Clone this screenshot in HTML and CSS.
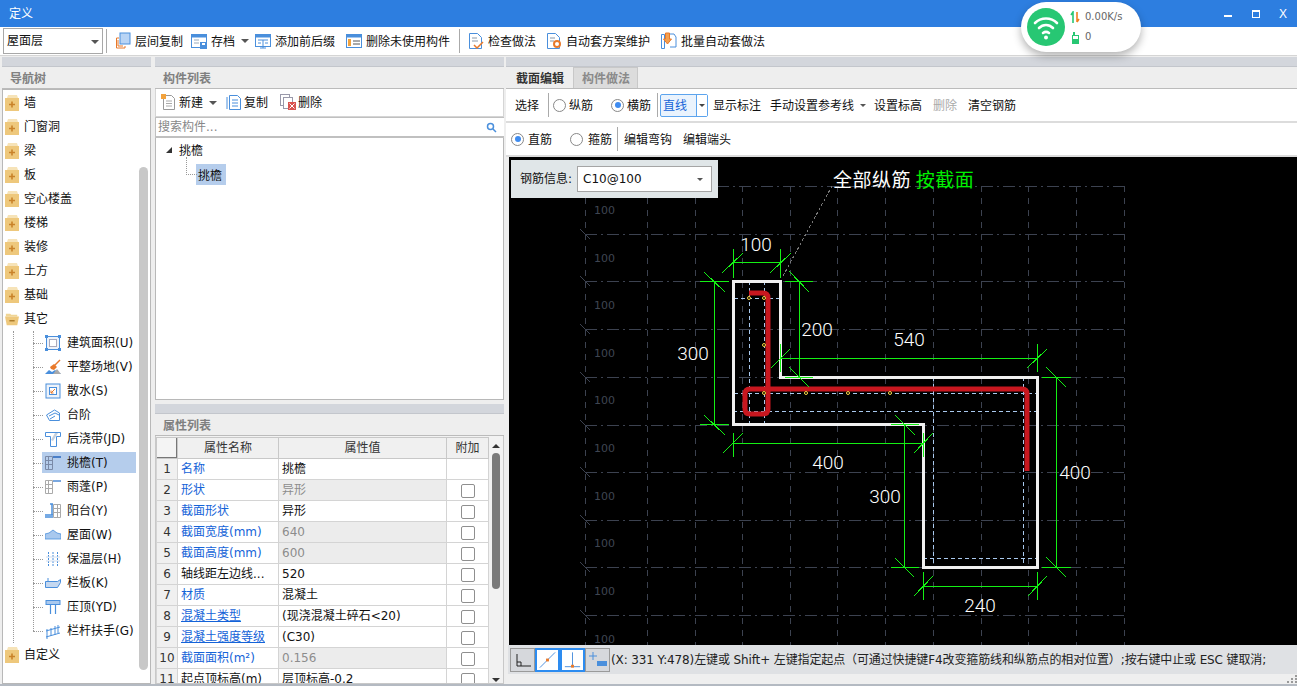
FILE: index.html
```html
<!DOCTYPE html>
<html lang="zh">
<head>
<meta charset="utf-8">
<title>定义</title>
<link rel="stylesheet" href="styles.css">
</head>
<body>
<svg class="defs" width="0" height="0">
  <symbol id="folder" viewBox="0 0 14 16"><path d="M3 0h9l1 3H2z" fill="#f6e3b8"/><rect x="0" y="3" width="14" height="13" fill="#eec87c"/><path d="M7 6.500v6M4 9.500h6" stroke="#c9822a" stroke-width="1.600"/></symbol>
  <symbol id="folderopen" viewBox="0 0 16 16"><path d="M1 2h5l1 1h7v2H1z" fill="#f0d595"/><path d="M0 5h16l-2 10H2z" fill="#eec87c"/><path d="M5 10h6" stroke="#a97a2a" stroke-width="1.600"/></symbol>
  <symbol id="caret" viewBox="0 0 8 4"><path d="M0 0h8L4 4z" fill="#555"/></symbol>
</svg>
<div class="app">
  <header class="titlebar">
    <span class="title">定义</span>
    <div class="winctl">
      <svg width="10" height="10" viewBox="0 0 10 10"><rect x="1" y="6" width="8" height="2" fill="#fff"/></svg>
      <svg width="10" height="10" viewBox="0 0 10 10"><rect x="1.500" y="1.500" width="7" height="7" fill="none" stroke="#fff"/><rect x="1" y="1" width="8" height="2" fill="#fff"/></svg>
      <span class="winx">X</span>
    </div>
  </header>
  <div class="netwidget">
    <svg class="wifi" width="38" height="38" viewBox="0 0 38 38"><circle cx="19" cy="19" r="19" fill="#27c773"/><g fill="none" stroke="#fff" stroke-width="2.600" stroke-linecap="round"><path d="M8 15c6-6 16-6 22 0"/><path d="M12 20c4-4 10-4 14 0"/><path d="M16 25c2-1.500 4-1.500 6 0"/></g><circle cx="19" cy="29.500" r="2" fill="#fff"/></svg>
    <div class="netinfo">
      <div class="netrow"><svg width="10" height="13" viewBox="0 0 10 13"><path d="M3 12V2M1 4l2-3 0 11" fill="none" stroke="#27c773" stroke-width="1.600"/><path d="M7 1v10M9 8l-2 3" fill="none" stroke="#f08020" stroke-width="1.600"/></svg><span>0.00K/s</span></div>
      <div class="netrow"><svg width="10" height="13" viewBox="0 0 10 13"><rect x="2" y="4" width="7" height="9" fill="#27c773"/><rect x="3" y="5" width="5" height="3" fill="#fff"/><rect x="3" y="1" width="2" height="3" fill="#27c773"/></svg><span>0</span></div>
    </div>
  </div>
  <div class="mainbar">
    <div class="floorselect"><span>屋面层</span><svg class="caret" width="8" height="4"><use href="#caret"/></svg></div>
    <span class="sep s3"></span>
    <div class="btn g8"><svg width="16" height="18" viewBox="0 0 16 18"><rect x="5" y="1" width="10" height="11" fill="#b8d4f5" stroke="#4a8fdc"/><path d="M4 6H1.500v10H10v-2" fill="none" stroke="#e8792a"/><path d="M3 8v6h5" fill="none" stroke="#e8792a"/></svg><span>层间复制</span></div>
    <div class="btn g6"><svg width="16" height="16" viewBox="0 0 16 16"><rect x="0.500" y="1.500" width="15" height="13" fill="#fff" stroke="#4a8fdc"/><rect x="0.500" y="1.500" width="15" height="3" fill="#4a8fdc"/><path d="M3 7h5M3 10h5" stroke="#9ab"/><rect x="9" y="9" width="7" height="7" fill="#4a8fdc"/><rect x="11" y="10" width="3" height="2" fill="#fff"/></svg><span>存档</span></div>
    <svg class="caret g6" width="8" height="4"><use href="#caret"/></svg>
    <div class="btn g11"><svg width="16" height="16" viewBox="0 0 16 16"><rect x="0.500" y="1.500" width="15" height="12" fill="#fff" stroke="#4a8fdc"/><rect x="0.500" y="1.500" width="15" height="3" fill="#4a8fdc"/><path d="M3 7h10M8 7v8M5 15h6M3 10h3M10 10h3" stroke="#4a8fdc"/></svg><span>添加前后缀</span></div>
    <div class="btn g9"><svg width="16" height="16" viewBox="0 0 16 16"><rect x="0.500" y="1.500" width="15" height="13" fill="#fff" stroke="#4a8fdc"/><rect x="0.500" y="1.500" width="15" height="3" fill="#4a8fdc"/><rect x="2" y="6" width="3" height="7" fill="#f2a23c"/><path d="M7 8h7M7 11h7" stroke="#555"/></svg><span>删除未使用构件</span></div>
    <span class="sep g8"></span>
    <div class="btn g10"><svg width="16" height="16" viewBox="0 0 16 16"><path d="M1.500.5h8l4 4v11h-12z" fill="#fff" stroke="#4a8fdc"/><path d="M4 5h5M4 8h6" stroke="#89a"/><path d="M6 12l3 3 6-6" fill="none" stroke="#e8792a" stroke-width="1.500"/></svg><span>检查做法</span></div>
    <div class="btn g10"><svg width="16" height="16" viewBox="0 0 16 16"><path d="M1.500.5h8l4 4v11h-12z" fill="#fff" stroke="#4a8fdc"/><path d="M4 5h5M4 8h4" stroke="#89a"/><circle cx="11" cy="11" r="3" fill="#fff" stroke="#e8792a" stroke-width="2"/></svg><span>自动套方案维护</span></div>
    <div class="btn"><svg width="17" height="18" viewBox="0 0 17 18"><path d="M1.500 2.500h3v14h-3zM5 2h9l2 3v10h-6" fill="none" stroke="#4a8fdc"/><path d="M5.500 1h4v6h2l-4 5-4-5h2z" fill="#f4a050" stroke="#e8792a"/></svg><span>批量自动套做法</span></div>
  </div>

  <div class="workspace">
    <section class="panel">
      <div class="panelbar"></div>
      <div class="tabstrip"><span class="tab plain">导航树</span></div>
      <div class="navtree">
        <div class="navrow"><svg class="fold"><use href="#folder"/></svg>墙</div>
        <div class="navrow"><svg class="fold"><use href="#folder"/></svg>门窗洞</div>
        <div class="navrow"><svg class="fold"><use href="#folder"/></svg>梁</div>
        <div class="navrow"><svg class="fold"><use href="#folder"/></svg>板</div>
        <div class="navrow"><svg class="fold"><use href="#folder"/></svg>空心楼盖</div>
        <div class="navrow"><svg class="fold"><use href="#folder"/></svg>楼梯</div>
        <div class="navrow"><svg class="fold"><use href="#folder"/></svg>装修</div>
        <div class="navrow"><svg class="fold"><use href="#folder"/></svg>土方</div>
        <div class="navrow"><svg class="fold"><use href="#folder"/></svg>基础</div>
        <div class="navrow"><svg class="fold"><use href="#folderopen"/></svg>其它</div>
        <div class="navchildren">
          <div class="childrow"><svg width="16" height="16" viewBox="0 0 16 16"><rect x="1.500" y="1.500" width="13" height="13" fill="#eef3fa" stroke="#4a8fdc"/><rect x="4.500" y="4.500" width="7" height="7" fill="#fff" stroke="#aab"/><path d="M0 0h3v3H0zM13 0h3v3h-3zM0 13h3v3H0zM13 13h3v3h-3z" fill="#4a8fdc"/></svg><span>建筑面积(U)</span></div>
          <div class="childrow"><svg width="16" height="16" viewBox="0 0 16 16"><path d="M0 15l4-4 3 2 3-2 6 4z" fill="#4a8fdc"/><path d="M8 15l4-5 4 5z" fill="#aaa"/><path d="M15 1L9 7" stroke="#e8792a" stroke-width="1.500"/><path d="M9 5l3 3-3 3-3-1-1-2z" fill="#e8792a"/></svg><span>平整场地(V)</span></div>
          <div class="childrow"><svg width="16" height="16" viewBox="0 0 16 16"><rect x="1" y="1" width="14" height="14" fill="#eef3fa" stroke="#4a8fdc"/><rect x="4.500" y="4.500" width="7" height="7" fill="#fff" stroke="#4a8fdc"/><path d="M10 6l-4 4M6 7.500V10h2.500" fill="none" stroke="#e8792a"/></svg><span>散水(S)</span></div>
          <div class="childrow"><svg width="16" height="16" viewBox="0 0 16 16"><path d="M1.500 8l8-5 5 3v7.500h-10z" fill="#fff" stroke="#4a8fdc"/><path d="M4 9l6-3 4 2M5 12l5-3" fill="none" stroke="#4a8fdc"/></svg><span>台阶</span></div>
          <div class="childrow"><svg width="16" height="16" viewBox="0 0 16 16"><path d="M.5 1.500h15v4h-4v10h-6v-10h-5z" fill="#fff" stroke="#4a8fdc"/><path d="M6 9l4-7h3l-5 8z" fill="#c5d0de"/></svg><span>后浇带(JD)</span></div>
          <div class="childrow sel"><svg width="16" height="16" viewBox="0 0 16 16"><path d="M.5 1.500h7v13h-7zM.5 5.500h7M.5 9.500h7M3.500 1.500v13" fill="none" stroke="#7a8aa8"/><path d="M8 1h8v2H8z" fill="#4a7fc8"/></svg><span>挑檐(T)</span></div>
          <div class="childrow"><svg width="16" height="16" viewBox="0 0 16 16"><path d="M.5 1.500h7v13h-7zM.5 5.500h7M.5 9.500h7M3.500 1.500v13" fill="none" stroke="#aaa"/><path d="M8 1h8v2H8z" fill="#7aa8e0"/></svg><span>雨蓬(P)</span></div>
          <div class="childrow"><svg width="16" height="16" viewBox="0 0 16 16"><path d="M8.500 1.500h7v13h-7zM8.500 5.500h7M8.500 9.500h7M12.500 1.500v13" fill="none" stroke="#aaa"/><path d="M5 1h3M7 1v11M0 12h8M0 14h8" stroke="#4a8fdc" stroke-width="1.500" fill="none"/></svg><span>阳台(Y)</span></div>
          <div class="childrow"><svg width="16" height="16" viewBox="0 0 16 16"><path d="M0 7l4-1 4-3 4 3 4 1v5H0z" fill="#a8c8ee" stroke="#4a8fdc" stroke-width=".8"/></svg><span>屋面(W)</span></div>
          <div class="childrow"><svg width="16" height="16" viewBox="0 0 16 16"><path d="M3.500 1v14M8 1v14M12.500 1v14" stroke="#4a8fdc" stroke-dasharray="2 1" fill="none"/><path d="M1 6h14M1 10h14" stroke="#cfdcee"/></svg><span>保温层(H)</span></div>
          <div class="childrow"><svg width="16" height="16" viewBox="0 0 16 16"><path d="M.5 6.500h12l3-2v3l-3 5H.5z" fill="#c5d8f0" stroke="#4a8fdc"/><path d="M3 3v3" stroke="#4a8fdc"/></svg><span>栏板(K)</span></div>
          <div class="childrow"><svg width="16" height="16" viewBox="0 0 16 16"><rect x="1" y="1.500" width="14" height="4" fill="#a8c8ee" stroke="#4a8fdc"/><path d="M5.500 5v10M10.500 5v10" stroke="#4a8fdc" stroke-width="1.200"/></svg><span>压顶(YD)</span></div>
          <div class="childrow"><svg width="16" height="16" viewBox="0 0 16 16"><path d="M1 8l14-4M2 6v10M6 5v8M10 3v9M13 2v8M1 14l14-4" fill="none" stroke="#4a8fdc"/></svg><span>栏杆扶手(G)</span></div>
        </div>
        <div class="navrow"><svg class="fold"><use href="#folder"/></svg>自定义</div>
        <div class="navscroll"></div>
      </div>
    </section>

    <div class="midcol">
      <section class="panel compo">
        <div class="panelbar"></div>
        <div class="tabstrip"><span class="tab plain">构件列表</span></div>
        <div class="compotools">
          <div class="btn"><svg width="16" height="16" viewBox="0 0 16 16"><path d="M2.500 1.500h8l3 3v11h-11z" fill="#fff" stroke="#999"/><path d="M5 7h6M5 9.500h6M5 12h6" stroke="#aaa"/><rect x="0" y="0" width="5" height="5" fill="#f2a23c"/></svg><span>新建</span></div>
          <svg class="caret ctcaret" width="8" height="4"><use href="#caret"/></svg>
          <div class="btn"><svg width="16" height="16" viewBox="0 0 16 16"><path d="M3.500 1.500h8l3 3v11h-11z" fill="#fff" stroke="#4a8fdc"/><path d="M1 3v12" stroke="#4a8fdc"/><path d="M6 6h6M6 9h6M6 12h6" stroke="#4a8fdc"/></svg><span>复制</span></div>
          <div class="btn cdel"><svg width="16" height="16" viewBox="0 0 16 16"><rect x="0.500" y="0.500" width="9" height="11" fill="#fff" stroke="#99a"/><rect x="3.500" y="3.500" width="9" height="11" fill="#fff" stroke="#99a"/><rect x="8" y="8" width="8" height="8" fill="#d9534f"/><path d="M9.500 9.500l5 5M14.500 9.500l-5 5" stroke="#fff"/></svg><span>删除</span></div>
        </div>
        <div class="searchbox"><span>搜索构件...</span><svg width="11" height="11" viewBox="0 0 11 11"><circle cx="4.500" cy="4.500" r="3" fill="none" stroke="#4a8fdc" stroke-width="1.500"/><path d="M7 7l3 3" stroke="#4a8fdc" stroke-width="1.500"/></svg></div>
        <div class="compotree">
          <div class="ctroot"><i class="tri"></i>挑檐</div>
          <div class="ctchild"><span class="ctsel">挑檐</span></div>
        </div>
      </section>

      <section class="panel props">
        <div class="panelbar"></div>
        <div class="tabstrip"><span class="tab plain">属性列表</span></div>
        <div class="tablewrap">
          <table class="ptable">
            <colgroup><col class="c1"><col class="c2"><col class="c3"><col class="c4"></colgroup>
            <thead><tr><th class="corner"></th><th>属性名称</th><th>属性值</th><th>附加</th></tr></thead>
            <tbody>
              <tr><td class="num">1</td><td class="lk">名称</td><td>挑檐</td><td></td></tr>
              <tr><td class="num">2</td><td class="lk">形状</td><td class="ro">异形</td><td class="ck"><span class="check"></span></td></tr>
              <tr><td class="num">3</td><td class="lk">截面形状</td><td>异形</td><td class="ck"><span class="check"></span></td></tr>
              <tr><td class="num">4</td><td class="lk">截面宽度(mm)</td><td class="ro">640</td><td class="ck"><span class="check"></span></td></tr>
              <tr><td class="num">5</td><td class="lk">截面高度(mm)</td><td class="ro">600</td><td class="ck"><span class="check"></span></td></tr>
              <tr><td class="num">6</td><td>轴线距左边线...</td><td>520</td><td class="ck"><span class="check"></span></td></tr>
              <tr><td class="num">7</td><td class="lk">材质</td><td>混凝土</td><td class="ck"><span class="check"></span></td></tr>
              <tr><td class="num">8</td><td class="lk u">混凝土类型</td><td>(现浇混凝土碎石&lt;20)</td><td class="ck"><span class="check"></span></td></tr>
              <tr><td class="num">9</td><td class="lk u">混凝土强度等级</td><td>(C30)</td><td class="ck"><span class="check"></span></td></tr>
              <tr><td class="num">10</td><td class="lk">截面面积(m²)</td><td class="ro">0.156</td><td class="ck"><span class="check"></span></td></tr>
              <tr><td class="num">11</td><td>起点顶标高(m)</td><td>层顶标高-0.2</td><td class="ck"><span class="check"></span></td></tr>
            </tbody>
          </table>
          <div class="vscroll">
            <svg width="8" height="4" viewBox="0 0 8 4"><path d="M0 4h8L4 0z" fill="#333"/></svg>
            <div class="vthumb"></div>
            <svg width="8" height="4" viewBox="0 0 8 4"><path d="M0 0h8L4 4z" fill="#333"/></svg>
          </div>
        </div>
      </section>
    </div>

    <section class="panel right">
      <div class="panelbar"></div>
      <div class="tabstrip tabs2"><span class="tab active">截面编辑</span><span class="tab inactive">构件做法</span></div>
      <div class="edittools">
        <span class="ti ml7">选择</span>
        <span class="sep ml9"></span>
        <span class="radio ml4"></span><span class="ti ml3">纵筋</span>
        <span class="radio on ml18"></span><span class="ti ml3">横筋</span>
        <span class="sep ml6"></span>
        <div class="linecombo ml2"><span class="lcv">直线</span><span class="lcd"><svg width="6" height="3" viewBox="0 0 8 4"><path d="M0 0h8L4 4z" fill="#444"/></svg></span></div>
        <span class="ti ml5">显示标注</span>
        <span class="ti ml9">手动设置参考线</span>
        <svg class="caret ml6" width="6" height="3" viewBox="0 0 8 4"><path d="M0 0h8L4 4z" fill="#555"/></svg>
        <span class="ti ml8">设置标高</span>
        <span class="ti ml11 dis">删除</span>
        <span class="ti ml11">清空钢筋</span>
      </div>
      <div class="edittools second">
        <span class="radio on ml3"></span><span class="ti ml4">直筋</span>
        <span class="radio ml18"></span><span class="ti ml5">箍筋</span>
        <span class="sep ml5"></span>
        <span class="ti ml6">编辑弯钩</span>
        <span class="ti ml11">编辑端头</span>
      </div>
      <div class="canvas">
        <svg class="drawing" width="788" height="488" viewBox="509 157 788 488">
          <g class="gridh">
            <path d="M585 186H1124M585 234H1124M585 281H1124M585 329H1124M585 377H1124M585 425H1124M585 472H1124M585 520H1124M585 567H1124M585 615H1124"/>
          </g>
          <g class="gridv">
            <path d="M585 186V645M647 186V645M695 186V645M742 186V645M790 186V645M837 186V645M885 186V645M933 186V645M981 186V645M1028 186V645M1076 186V645M1124 186V645"/>
          </g>
          <g class="ticks"><path d="M580 181l10 10M580 229l10 10M580 276l10 10M580 324l10 10M580 372l10 10M580 420l10 10M580 467l10 10M580 515l10 10M580 562l10 10M580 610l10 10"/></g>
          <g class="axis">
            <text x="594" y="214">100</text><text x="594" y="262">100</text><text x="594" y="309">100</text><text x="594" y="357">100</text><text x="594" y="404">100</text><text x="594" y="452">100</text><text x="594" y="500">100</text><text x="594" y="547">100</text><text x="594" y="595">100</text><text x="594" y="643">100</text>
          </g>
          <path class="leader" d="M783 276L832 186"/>
          <g class="inner"><path d="M734 298H780M734 393H1037M733 411H1037M749 281V424M764 281V424M1023 377V567M933 377V567M923 558H1037"/></g>
          <path class="outline" d="M733.500 281.500H780.500V377.500H1037.500V567.500H923.500V424.500H733.500Z"/>
          <path class="rebar" d="M749 293H763Q768 293 768 298V409Q768 414 763 414H750Q745 414 745 409V394Q745 389 750 389H1022Q1027 389 1027 394V471"/>
          <g class="points"><circle cx="749" cy="298" r="1.500"/><circle cx="764" cy="298" r="1.500"/><circle cx="764" cy="345" r="1.500"/><circle cx="764" cy="393" r="1.500"/><circle cx="806" cy="393" r="1.500"/><circle cx="848" cy="393" r="1.500"/><circle cx="890" cy="393" r="1.500"/></g>
          <g class="dims">
            <path d="M733 262H780M733 249V278M780 249V278M722 273L743 253M770 273L791 253"/>
            <path d="M714 281V424M700 281H729M700 424H729M704 272L725 292M704 415L725 435"/>
            <path d="M799 281V377M785 281H813M785 377H813M789 271L809 292M789 367L809 387"/>
            <path d="M780 358H1037M780 344V372M1037 344V372M771 368L790 349M1027 368L1047 349"/>
            <path d="M733 443H923M733 433V457M923 433V457M723 453L743 433M914 453L933 433"/>
            <path d="M904 424V567M891 424H919M891 567H919M895 415L915 435M895 558L914 577"/>
            <path d="M1056 377V567M1042 377H1071M1042 567H1071M1046 367L1066 387M1046 557L1066 577"/>
            <path d="M923 586H1037M923 572V600M1037 572V600M914 596L933 576M1028 596L1047 576"/>
          </g>
          <g class="dimtext">
            <text x="756" y="251">100</text><text x="693" y="360">300</text><text x="817" y="336">200</text><text x="909" y="346">540</text><text x="828" y="469">400</text><text x="885" y="503">300</text><text x="1075" y="479">400</text><text x="980" y="612">240</text>
          </g>
          <text class="note" x="833" y="187">全部纵筋 <tspan class="noteg">按截面</tspan></text>
        </svg>
        <div class="rebarinfo">
          <span>钢筋信息:</span>
          <div class="rebarselect"><span>C10@100</span><svg width="6" height="3" viewBox="0 0 8 4"><path d="M0 0h8L4 4z" fill="#555"/></svg></div>
        </div>
      </div>
      <div class="statusbar">
        <div class="sbtn"><svg width="22" height="22" viewBox="0 0 22 22"><path d="M5 5v12h14M5 13h4v4" fill="none" stroke="#222"/></svg></div>
        <div class="sbtn on"><svg width="22" height="22" viewBox="0 0 22 22"><path d="M3 19L19 3" stroke="#4a8fdc"/><rect x="9.500" y="9.500" width="3" height="3" fill="#e8792a"/></svg></div>
        <div class="sbtn on"><svg width="22" height="22" viewBox="0 0 22 22"><path d="M11 3v15M3 18h16" stroke="#4a8fdc"/><rect x="9.500" y="16" width="3" height="3" fill="#e8792a"/></svg></div>
        <div class="sbtn"><svg width="22" height="22" viewBox="0 0 22 22"><path d="M6 3v8M2 7h8" stroke="#4a8fdc"/><rect x="10" y="12" width="10" height="5" fill="#4a8fdc"/></svg></div>
        <span class="statustext">(X: 331 Y:478)左键或 Shift+ 左键指定起点（可通过快捷键F4改变箍筋线和纵筋点的相对位置）;按右键中止或 ESC 键取消;</span>
      </div>
      <div class="footer"><svg width="10" height="8" viewBox="0 0 10 8"><path d="M8 0h2v2H8zM4 3h2v2H4zM8 3h2v2H8zM0 6h2v2H0zM4 6h2v2H4zM8 6h2v2H8z" fill="#999"/></svg></div>
    </section>
  </div>
</div>
</body>
</html>
```
FILE: styles.css
```css
* { box-sizing: border-box; }
html, body { margin: 0; padding: 0; }
body {
  width: 1297px; height: 686px; overflow: hidden;
  font: 12px/1.2 "DejaVu Sans", "Noto Sans CJK SC", sans-serif;
  color: #111;
  background: #eeeeee;
}
.defs { position: absolute; }
.app { position: relative; width: 1297px; height: 686px; display: flex; flex-direction: column; border-bottom: 2px solid #b4bac2; }
.titlebar { height: 27px; flex: none; background: #2d7ee0; display: flex; align-items: center; justify-content: space-between; color: #fff; padding: 0 9px; }
.title { font-size: 12px; font-family: "Noto Sans CJK SC", sans-serif; }
.winctl { display: flex; align-items: center; gap: 18px; }
.winx { font: 12px "Liberation Sans", sans-serif; width: 9px; }
.netwidget { position: absolute; left: 1021px; top: 2px; width: 120px; height: 50px; border-radius: 25px; background: #fff; box-shadow: 0 4px 8px rgba(0,0,0,.3); display: flex; align-items: center; padding-left: 6px; gap: 5px; }
.wifi { flex: none; }
.netinfo { display: flex; flex-direction: column; gap: 7px; font-size: 10px; color: #666; }
.netrow { display: flex; align-items: center; gap: 5px; }
.mainbar { height: 29px; flex: none; background: #fff; display: flex; align-items: center; padding-left: 3px; border-bottom: 1px solid #d5d5d5; }
.floorselect { width: 100px; height: 26px; border: 1px solid #a8a8a8; display: flex; align-items: center; justify-content: space-between; padding: 1px 3px 0 3px; font-size: 12px; }
.caret { flex: none; }
.sep { width: 1px; height: 24px; background: #aaa; flex: none; }
.s3 { margin: 0 8px 0 3px; }
.btn { display: flex; align-items: center; gap: 4px; flex: none; }
.btn svg { flex: none; }
.btn span, .ti { padding-top: 2px; }
.g6 { margin-right: 6px; }
.g8 { margin-right: 8px; }
.g9 { margin-right: 9px; }
.g10 { margin-right: 10px; }
.g11 { margin-right: 11px; }
.workspace { flex: 1; min-height: 0; display: grid; grid-template-columns: 149px 349px 791px; column-gap: 4px; padding: 1px 0 0 2px; }
.right { margin-left: -2px; }
.midcol { display: flex; flex-direction: column; gap: 4px; min-height: 0; }
.panel { display: flex; flex-direction: column; min-height: 0; }
.compo { height: 343px; flex: none; }
.props { flex: 1; }
.panelbar { height: 10px; flex: none; background: #d3d6dc; border-bottom: 1px solid #c3c6cc; }
.tabstrip { height: 22px; flex: none; background: #eeeeee; border-bottom: 1px solid #bbb; display: flex; font-family: "Noto Sans CJK SC", sans-serif; }
.tab { display: flex; align-items: center; padding: 1px 8px 0; font-weight: 700; color: #808080; }
.tab.active { width: 65px; color: #333; padding: 1px 0 0 8px; background: #eeeeee; }
.tab.inactive { width: 65px; background: #dcdcdc; border: 1px solid #c8c8c8; border-bottom: 0; padding: 1px 0 0 8px; color: #8a8a8a; }
.tabs2 { padding-left: 2px; }
.navtree { position: relative; flex: 1; background: #fff; border: 1px solid #b8b8b8; padding-top: 1px; overflow: hidden; }
.navrow { height: 24px; display: flex; align-items: center; gap: 5px; padding-left: 2px; }
.fold { width: 14px; height: 16px; flex: none; }
.navchildren { margin-left: 10px; border-left: 1px dotted #999; padding-left: 19px; position: relative; }
.childrow { height: 24px; display: flex; align-items: center; gap: 6px; position: relative; padding-left: 12px; }
.childrow::before { content: ""; position: absolute; left: 0; top: 12px; width: 10px; border-top: 1px dotted #999; }
.childrow span { position: relative; }
.navchildren::before { content: ""; position: absolute; left: 19px; top: 0; bottom: 12px; border-left: 1px dotted #999; }
.childrow svg { position: relative; flex: none; }
.childrow.sel { background: linear-gradient(#b5cdec, #b5cdec) no-repeat 9px 1px / 94px 21px; }
.navscroll { position: absolute; left: 136px; top: 77px; width: 9px; height: 503px; border-radius: 5px; background: #c8c8c8; }
.compotools { height: 28px; flex: none; display: flex; align-items: center; gap: 9px; background: #fff; padding-left: 5px; border: 1px solid #d5d5d5; border-top: 0; }
.compotools .btn { gap: 2px; }
.ctcaret { margin-left: -3px; }
.cdel { margin-left: 3px; }
.searchbox { height: 21px; flex: none; background: #fff; border: 1px solid #c0c0c0; border-width: 1px 0 2px 1px; display: flex; align-items: center; justify-content: space-between; padding: 1px 7px 0 2px; color: #888; }
.compotree { flex: 1; background: #fff; border: 1px solid #b8b8b8; border-top: 0; font-family: "Noto Sans CJK SC", sans-serif; }
.ctroot { height: 24px; display: flex; align-items: center; padding-left: 10px; gap: 7px; }
.tri { width: 0; height: 0; border-style: solid; border-width: 0 0 6px 6px; border-color: transparent transparent #333 transparent; }
.ctchild { height: 24px; padding-left: 40px; position: relative; display: flex; align-items: center; }
.ctchild::before { content: ""; position: absolute; left: 30px; top: -5px; width: 10px; height: 17px; border-left: 1px dotted #999; border-bottom: 1px dotted #999; }
.ctsel { background: #b5cdec; padding: 2px 4px 2px 2px; line-height: 17px; }
.tablewrap { flex: 1; background: #f2f2f2; border: 1px solid #c8c8c8; border-top: 0; padding-top: 1px; display: flex; overflow: hidden; min-height: 0; }
.ptable { table-layout: fixed; width: 332px; height: 0; border-collapse: collapse; flex: none; background: #fff; }
.c1 { width: 21px; } .c2 { width: 101px; } .c3 { width: 168px; } .c4 { width: 42px; }
.ptable th, .ptable td { height: 21px; padding: 0 0 0 3px; border: 1px solid #d4d4d4; white-space: nowrap; overflow: hidden; font-weight: 400; font-size: 12px; line-height: 20px; }
.ptable th { background: #f0f0f0; text-align: center; color: #333; padding: 0; border-color: #c8c8c8; }
.ptable th.corner { background: #f4f4f4; box-shadow: inset -1px -1px 0 #777; }
.ptable td.num { background: #f0f0f0; text-align: center; padding: 0; color: #333; }
.lk { color: #1463d8; }
.u { text-decoration: underline; }
.ro { background: #ececec; color: #8c8c8c; }
.ck { text-align: center; padding: 0 !important; }
.check { display: inline-block; width: 14px; height: 14px; border: 1px solid #8f8f8f; border-radius: 2px; background: #fff; vertical-align: middle; }
.vscroll { flex: 1; display: flex; flex-direction: column; align-items: center; padding-top: 7px; gap: 5px; }
.vthumb { width: 8px; flex: 1; max-height: 136px; margin-bottom: 84px; border-radius: 4px; background: #7a7a7a; }
.edittools { height: 34px; flex: none; background: #fff; display: flex; align-items: center; border-bottom: 2px solid #dcdcdc; padding-left: 2px; }
.edittools.second { height: 34px; }
.ti { flex: none; }
.dis { color: #aaa; }
.ml2 { margin-left: 2px; } .ml3 { margin-left: 3px; } .ml4 { margin-left: 4px; } .ml5 { margin-left: 5px; } .ml6 { margin-left: 6px; } .ml7 { margin-left: 7px; } .ml8 { margin-left: 8px; } .ml9 { margin-left: 9px; } .ml11 { margin-left: 11px; } .ml18 { margin-left: 18px; }
.radio { width: 13px; height: 13px; border: 1px solid #888; border-radius: 50%; background: #fff; flex: none; display: flex; align-items: center; justify-content: center; }
.radio.on::after { content: ""; width: 6px; height: 6px; border-radius: 50%; background: #3f8cf0; }
.linecombo { width: 48px; height: 23px; border: 1px solid #5ca4ee; border-radius: 2px; display: flex; background: #eaf3fd; flex: none; }
.lcv { flex: 1; color: #1463d8; padding: 1px 0 0 2px; line-height: 21px; }
.lcd { width: 11px; border-left: 1px solid #5ca4ee; display: flex; align-items: center; justify-content: center; background: #fff; }
.canvas { position: relative; height: 488px; flex: none; margin-left: 3px; background: #000; overflow: hidden; }
.drawing { display: block; }
.gridh path { stroke: #3c4250; stroke-dasharray: 12 4 2 4; fill: none; shape-rendering: crispEdges; }
.gridv path { stroke: #3c4250; stroke-dasharray: 6 6; fill: none; shape-rendering: crispEdges; }
.ticks path { stroke: #3c4250; fill: none; shape-rendering: crispEdges; }
.axis text { font: 11px "DejaVu Sans", sans-serif; fill: #3f4552; }
.leader { stroke: #777; stroke-dasharray: 3 2; fill: none; shape-rendering: crispEdges; }
.inner path { stroke: #a9c9ee; stroke-dasharray: 4 3; fill: none; shape-rendering: crispEdges; }
.outline { stroke: #f0f0f0; stroke-width: 3; fill: none; shape-rendering: crispEdges; }
.rebar { stroke: #c8171f; stroke-width: 5; fill: none; }
.points circle { stroke: #f3d140; fill: #000; }
.dims path { stroke: #14f014; fill: none; shape-rendering: crispEdges; }
.dimtext text { font: 300 19px "Roboto", "Liberation Sans", sans-serif; fill: #fff; text-anchor: middle; }
.note { font: 19px "Noto Sans CJK SC", sans-serif; fill: #fff; letter-spacing: .5px; }
.noteg { fill: #00f000; }
.rebarinfo { position: absolute; left: 2px; top: 3px; width: 207px; height: 38px; background: #e0e6e8; display: flex; align-items: center; gap: 5px; padding-left: 9px; }
.rebarselect { width: 135px; height: 26px; background: #fff; border: 1px solid #a5a5a5; display: flex; align-items: center; justify-content: space-between; padding: 0 8px 0 5px; }
.statusbar { height: 29px; flex: none; margin-left: 2px; background: #dfe1e4; display: flex; align-items: center; padding-left: 2px; }
.sbtn { width: 25px; height: 24px; flex: none; border: 1px solid #9a9a9a; background: #d6d8dc; display: flex; align-items: center; justify-content: center; }
.sbtn.on { background: #fff; border: 2px solid #2d8cf0; }
.statustext { margin-left: 1px; padding-top: 1px; white-space: nowrap; font-size: 12px; color: #222; letter-spacing: -.12px; }
.footer { flex: 1; display: flex; justify-content: flex-end; align-items: flex-end; padding: 0 2px 1px 0; background: #efefef; }
```
